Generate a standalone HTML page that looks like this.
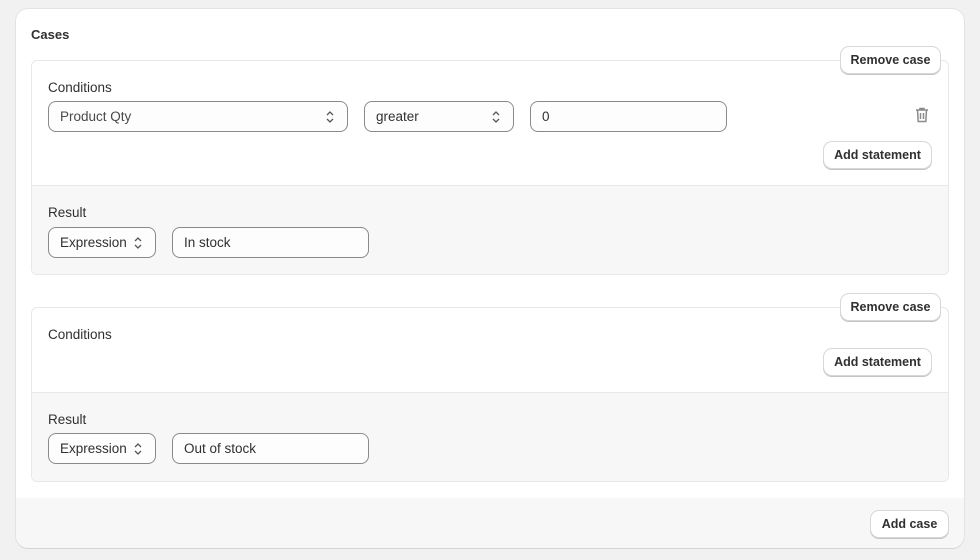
<!DOCTYPE html>
<html><head><style>
*{box-sizing:border-box;margin:0;padding:0}
body{width:980px;height:560px;background:#f1f1f1;font-family:"Liberation Sans",sans-serif;font-size:13px;color:#303030;position:relative;overflow:hidden}
.card{position:absolute;left:16px;top:9px;width:948px;height:539px;background:#fff;border-radius:12px;box-shadow:0 1px 0 #d4d4d4,0 0 0 1px #e3e3e3;overflow:hidden}
.foot{position:absolute;left:0;top:489px;width:948px;height:50px;background:#f7f7f7}
.abs{position:absolute}
.case{position:absolute;left:15px;width:918px;border:1px solid #e8e8e8;border-radius:6px;overflow:hidden;background:#fff}
.res{position:absolute;left:0;width:100%;background:#f7f7f7;border-top:1px solid #e8e8e8}
.btn{position:absolute;height:26px;background:#fff;border-radius:8px;box-shadow:0 0 0 1px #d8d8d8,0 1px 0 1px #c4c4c4;font-size:12.5px;font-weight:bold;color:#303030;display:flex;align-items:center;justify-content:center}
.in{position:absolute;height:31px;border:1px solid #8a8a8a;border-radius:8px;background:#fdfdfd;padding-left:11px;display:flex;align-items:center;font-size:13.5px}
.chev{position:absolute;right:12px;top:8px}
</style></head><body>
<div class="card">
<div class="abs" style="left:15px;top:18px;font-weight:bold;font-size:13px">Cases</div>

<div class="case" style="top:51px;height:215px">
 <div class="abs" style="left:16px;top:19px;font-size:13.5px">Conditions</div>
 <div class="in" style="left:16px;top:40px;width:300px;color:#4a4a4a">Product Qty<svg class="chev" width="10" height="14" viewBox="0 0 10 14"><path d="M2 5l3-3 3 3M2 9l3 3 3-3" fill="none" stroke="#555" stroke-width="1.3"/></svg></div>
 <div class="in" style="left:332px;top:40px;width:150px">greater<svg class="chev" width="10" height="14" viewBox="0 0 10 14"><path d="M2 5l3-3 3 3M2 9l3 3 3-3" fill="none" stroke="#555" stroke-width="1.3"/></svg></div>
 <div class="in" style="left:498px;top:40px;width:197px">0</div>
 <svg class="abs" style="left:883px;top:46px" width="14" height="16" viewBox="0 0 14 16"><path d="M1 3h12M5 3V1.5h4V3M2.5 3l.7 11.5h7.6L11.5 3M5.5 6v6M8.5 6v6" fill="none" stroke="#8a8a8a" stroke-width="1.5"/></svg>
 <div class="res" style="top:124px;height:91px">
  <div class="abs" style="left:16px;top:19px;font-size:13.5px">Result</div>
  <div class="in" style="left:16px;top:41px;width:108px;height:31px">Expression<svg class="chev" width="10" height="14" viewBox="0 0 10 14"><path d="M2 5l3-3 3 3M2 9l3 3 3-3" fill="none" stroke="#555" stroke-width="1.3"/></svg></div>
  <div class="in" style="left:140px;top:41px;width:197px">In stock</div>
 </div>
</div>
<div class="btn" style="left:808px;top:133px;width:107px">Add statement</div>
<div class="btn" style="left:825px;top:38px;width:99px">Remove case</div>

<div class="case" style="top:298px;height:175px">
 <div class="abs" style="left:16px;top:19px;font-size:13.5px">Conditions</div>
 <div class="res" style="top:84px;height:91px">
  <div class="abs" style="left:16px;top:19px;font-size:13.5px">Result</div>
  <div class="in" style="left:16px;top:40px;width:108px">Expression<svg class="chev" width="10" height="14" viewBox="0 0 10 14"><path d="M2 5l3-3 3 3M2 9l3 3 3-3" fill="none" stroke="#555" stroke-width="1.3"/></svg></div>
  <div class="in" style="left:140px;top:40px;width:197px">Out of stock</div>
 </div>
</div>
<div class="btn" style="left:808px;top:340px;width:107px">Add statement</div>
<div class="btn" style="left:825px;top:285px;width:99px">Remove case</div>

<div class="foot"></div>
<div class="btn" style="left:855px;top:502px;width:77px">Add case</div>
</div>
</body></html>
